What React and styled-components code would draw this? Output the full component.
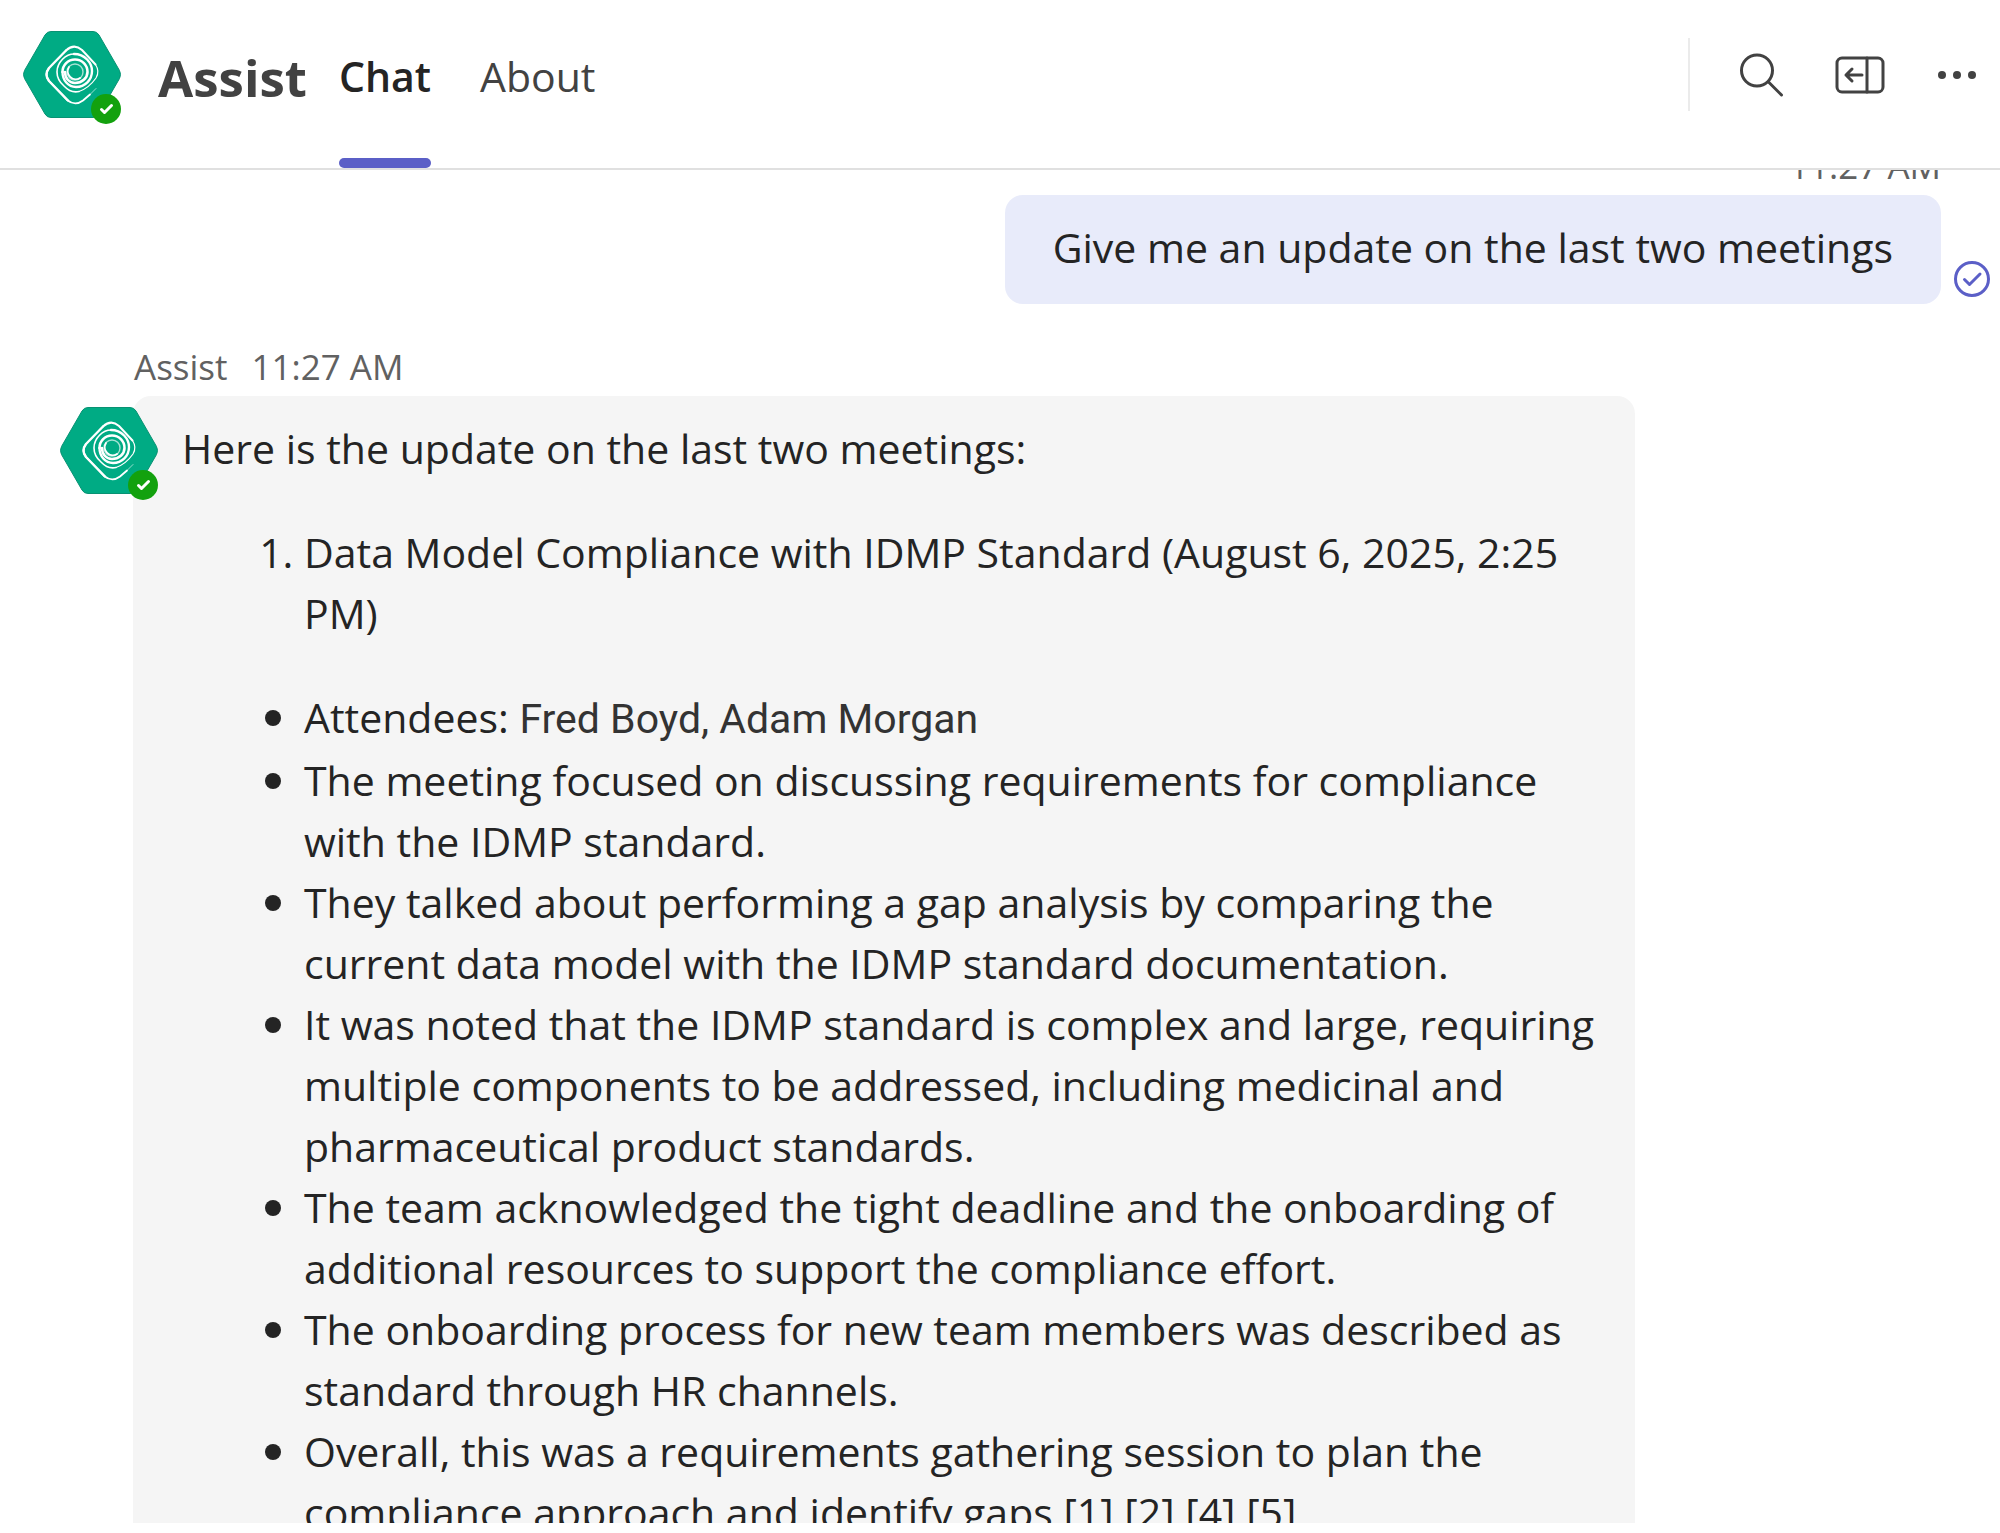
import React from 'react';
import styled, { createGlobalStyle } from 'styled-components';

const GlobalStyle = createGlobalStyle`
    * {
        box-sizing: border-box;
    }
    body {
        margin: 0;
        background: #ffffff;
        color: #242424;
        font-family: "Open Sans", "Noto Sans", sans-serif;
        font-size: 41px;
        line-height: 61px;
    }
`;

const Page = styled.div`
    height: 100vh;
    padding-bottom: 10px;
    display: flex;
    flex-direction: column;
    overflow: hidden;
`;

const Header = styled.header`
    display: flex;
    justify-content: space-between;
    height: 170px;
    flex-shrink: 0;
    padding: 0 17px 0 23px;
    border-bottom: 2px solid #e0e0e0;
`;

const Left = styled.div`
    display: flex;
`;

const Right = styled.div`
    display: flex;
    align-items: center;
    height: 149px;
`;

const AvatarBox = styled.div`
    position: relative;
    width: 98px;
    height: 87px;
    flex-shrink: 0;
    margin-top: ${props => props.$top}px;
`;

const Presence = styled.svg`
    position: absolute;
    right: 0;
    bottom: -6px;
`;

const Title = styled.h1`
    margin: 45px 32px 0 37px;
    font-size: 51px;
    line-height: 64px;
    font-weight: 700;
    color: #424242;
`;

const Tabs = styled.nav`
    display: flex;
    gap: 49px;
`;

const Tab = styled.button`
    display: flex;
    flex-direction: column;
    justify-content: space-between;
    padding: 46px 0 0;
    border: none;
    background: none;
    font: inherit;
    font-weight: ${props => (props.$active ? 600 : 400)};
    color: ${props => (props.$active ? '#242424' : '#424242')};
    cursor: pointer;

    &::after {
        content: "";
        width: 100%;
        height: 10px;
        border-radius: 5px;
        background: ${props => (props.$active ? '#5b5fc7' : 'transparent')};
    }
`;

const Divider = styled.div`
    width: 2px;
    height: 73px;
    margin-right: 47px;
    background: #ebebeb;
`;

const IconButton = styled.button`
    display: flex;
    align-items: center;
    justify-content: center;
    width: 50px;
    height: 50px;
    margin-left: ${props => props.$gap || 0}px;
    padding: 0;
    border: none;
    background: none;
    cursor: pointer;
`;

const Messages = styled.main`
    flex: 1;
    min-height: 0;
    overflow: hidden;
`;

const Sent = styled.section`
    display: flex;
    flex-direction: column;
    align-items: flex-end;
    margin-top: -28px;
`;

const SentTime = styled.time`
    margin-right: 59px;
    font-size: 35px;
    line-height: 48px;
    color: #616161;
`;

const SentRow = styled.div`
    display: flex;
    align-items: flex-end;
    gap: 12px;
    margin-top: 5px;
    padding-right: 9px;
`;

const SentBubble = styled.p`
    margin: 0;
    padding: 22px 48px 26px;
    border-radius: 18px;
    background: #e8ebfa;
`;

const SeenIcon = styled.svg`
    margin-bottom: 6px;
`;

const Received = styled.section`
    margin: 39px 365px 0 60px;
`;

const Meta = styled.div`
    display: flex;
    gap: 24px;
    margin-left: 74px;
    font-size: 35px;
    line-height: 48px;
    color: #616161;
`;

const ReceivedRow = styled.div`
    display: flex;
    margin-top: 5px;
`;

const ReceivedBubble = styled.div`
    flex: 1;
    margin-left: -25px;
    padding: 22px 32px 22px 49px;
    border-radius: 18px;
    background: #f5f5f5;

    p {
        margin: 0;
    }
`;

const NumberedList = styled.ol`
    margin: 43px 0;
    padding-left: 122px;
`;

const BulletList = styled.ul`
    margin: 0;
    padding-left: 122px;
    list-style: none;
`;

const Bullet = styled.li`
    display: flow-root;

    &::before {
        content: "";
        float: left;
        width: 16px;
        height: 16px;
        margin: 23px 0 0 -39px;
        border-radius: 50%;
        background: #242424;
    }
`;

const Names = styled.span`
    font-family: Roboto, sans-serif;
    color: #333333;
`;

const notes = [
    'The meeting focused on discussing requirements for compliance with the IDMP standard.',
    'They talked about performing a gap analysis by comparing the current data model with the IDMP standard documentation.',
    'It was noted that the IDMP standard is complex and large, requiring multiple components to be addressed, including medicinal and pharmaceutical product standards.',
    'The team acknowledged the tight deadline and the onboarding of additional resources to support the compliance effort.',
    'The onboarding process for new team members was described as standard through HR channels.',
    'Overall, this was a requirements gathering session to plan the compliance approach and identify gaps [1] [2] [4] [5]',
];

const Avatar = ({ top }) => (
    <AvatarBox $top={top}>
        <svg width="98" height="87" viewBox="0 0 98 87" fill="none">
            <path
                d="M28 .5H70Q74 .5 76 4L96.500 39.500Q98.500 43.500 96.500 47.500L76 83Q74 86.500 70 86.500H28Q24 86.500 22 83L1.500 47.500Q-.5 43.500 1.500 39.500L22 4Q24 .5 28 .5Z"
                fill="#00ab84"
                stroke="#089273"
            />
            <g stroke="#ffffff" strokeLinecap="round" strokeLinejoin="round">
                <path d="M73 57.500L67 63.500" strokeWidth="1" opacity=".6" />
                <path d="M67 63.500L60 69.500Q52 75.500 44 69L26 50Q21 43.500 26 37" strokeWidth="1.800" />
                <path d="M45 69.500L26 50Q21 43.500 26 37L43 19.500" strokeWidth="2.400" />
                <path d="M43 19.500Q51 12 59 19L72.500 33.500" strokeWidth="2" />
                <path d="M72.500 33.500Q77 40.500 73 47Q66 57 56 60.500" strokeWidth="1.200" />
                <path d="M56 60.500Q48 62.500 41 55Q34 49 34 41C34 31 43 23 51 23" strokeWidth="1.600" />
                <path d="M51 23C62 23 69 32 69 40C69 49 62 56 53 56C45 56 39.500 49 39.500 41" strokeWidth="2.400" />
                <path d="M39.500 41C39.500 34 45 28.500 52 28.500C59 28.500 64.500 34 64.500 41C64.500 47 59 52 52 52C46 52 42 47 42 41" strokeWidth="2.600" />
                <circle cx="52" cy="41" r="8" strokeWidth="1.400" opacity=".65" />
                <path d="M57 47A8 8 0 0 1 46 36" strokeWidth="1.800" />
            </g>
        </svg>
        <Presence width="30" height="30" viewBox="0 0 30 30" fill="none">
            <circle cx="15" cy="15" r="15" fill="#13a10e" />
            <path d="M10.500 15.500L13.500 18.500L20.500 11.500" stroke="#ffffff" strokeWidth="3" strokeLinecap="round" strokeLinejoin="round" />
        </Presence>
    </AvatarBox>
);

const App = () => {
    return (
    <>
        <GlobalStyle/>
        <Page>
            <Header>
                <Left>
                    <Avatar top={31}/>
                    <Title>Assist</Title>
                    <Tabs>
                        <Tab $active>Chat</Tab>
                        <Tab>About</Tab>
                    </Tabs>
                </Left>
                <Right>
                    <Divider/>
                    <IconButton aria-label="Search">
                        <svg width="50" height="50" viewBox="0 0 50 50" fill="none" stroke="#424242" strokeWidth="3" strokeLinecap="round">
                            <circle cx="20" cy="20.500" r="15.500"/>
                            <path d="M31.500 32L44.500 45"/>
                        </svg>
                    </IconButton>
                    <IconButton $gap={48} aria-label="Open side panel">
                        <svg width="50" height="50" viewBox="0 0 50 50" fill="none" stroke="#424242" strokeWidth="3" strokeLinecap="round" strokeLinejoin="round">
                            <rect x="2" y="8" width="46" height="34" rx="5"/>
                            <path d="M32 8V42M27 25H11M17 19L11 25L17 31"/>
                        </svg>
                    </IconButton>
                    <IconButton $gap={48} aria-label="More options">
                        <svg width="50" height="50" viewBox="0 0 50 50" fill="#424242">
                            <circle cx="9" cy="25" r="4"/>
                            <circle cx="24" cy="25" r="4"/>
                            <circle cx="39" cy="25" r="4"/>
                        </svg>
                    </IconButton>
                </Right>
            </Header>
            <Messages>
                <Sent>
                    <SentTime>11:27 AM</SentTime>
                    <SentRow>
                        <SentBubble>Give me an update on the last two meetings</SentBubble>
                        <SeenIcon width="38" height="38" viewBox="0 0 38 38" fill="none" stroke="#5b5fc7" strokeWidth="3" strokeLinecap="round" strokeLinejoin="round">
                            <circle cx="19" cy="19" r="16.500"/>
                            <path d="M11.500 19.500L16.500 24.500L27 14"/>
                        </SeenIcon>
                    </SentRow>
                </Sent>
                <Received>
                    <Meta>
                        <span>Assist</span>
                        <time>11:27 AM</time>
                    </Meta>
                    <ReceivedRow>
                        <Avatar top={11}/>
                        <ReceivedBubble>
                            <p>Here is the update on the last two meetings:</p>
                            <NumberedList>
                                <li>Data Model Compliance with IDMP Standard (August 6, 2025, 2:25 PM)</li>
                            </NumberedList>
                            <BulletList>
                                <Bullet>Attendees: <Names>Fred Boyd, Adam Morgan</Names></Bullet>
                                {notes.map(note => <Bullet key={note}>{note}</Bullet>)}
                            </BulletList>
                        </ReceivedBubble>
                    </ReceivedRow>
                </Received>
            </Messages>
        </Page>
    </>
  )
}

export default App
